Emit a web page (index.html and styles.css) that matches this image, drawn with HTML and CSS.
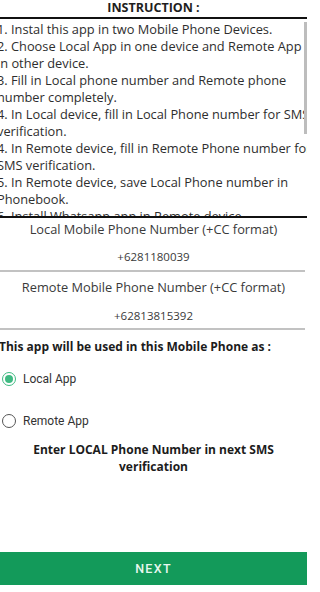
FILE: index.html
```html
<!DOCTYPE html>
<html>
<head>
<meta charset="utf-8">
<link rel="stylesheet" href="styles.css">
</head>
<body>
<div class="screen">
  <div class="title">INSTRUCTION :</div>
  <div class="rule"></div>
  <div class="instructions">
    <div class="instr-text">
      <div class="ln">1. Instal this app in two Mobile Phone Devices.</div>
      <div class="ln">2. Choose Local App in one device and Remote App</div>
      <div class="ln">in other device.</div>
      <div class="ln">3. Fill in Local phone number and Remote phone</div>
      <div class="ln">number completely.</div>
      <div class="ln">4. In Local device, fill in Local Phone number for SMS</div>
      <div class="ln">verification.</div>
      <div class="ln">4. In Remote device, fill in Remote Phone number for</div>
      <div class="ln">SMS verification.</div>
      <div class="ln">5. In Remote device, save Local Phone number in</div>
      <div class="ln">Phonebook.</div>
      <div class="ln">6. Install Whatsapp app in Remote device.</div>
    </div>
    <div class="scrollbar"></div>
  </div>
  <div class="rule"></div>
  <div class="field field-first">
    <div class="field-label">Local Mobile Phone Number (+CC format)</div>
    <div class="field-value">+6281180039</div>
  </div>
  <div class="underline"></div>
  <div class="field field-second">
    <div class="field-label">Remote Mobile Phone Number (+CC format)</div>
    <div class="field-value">+62813815392</div>
  </div>
  <div class="underline"></div>
  <div class="question">This app will be used in this Mobile Phone as :</div>
  <div class="radio-row radio-first">
    <span class="radio radio-on"><span class="radio-dot"></span></span>
    <span class="radio-label">Local App</span>
  </div>
  <div class="radio-row radio-second">
    <span class="radio"></span>
    <span class="radio-label">Remote App</span>
  </div>
  <div class="hint">Enter LOCAL Phone Number in next SMS<br>verification</div>
  <div class="spacer"></div>
  <div class="next-btn">NEXT</div>
  <div class="bottom-gap"></div>
</div>
</body>
</html>
```

FILE: styles.css
```css
html, body {
  margin: 0;
  padding: 0;
  background: #ffffff;
}
.screen {
  width: 307px;
  height: 592px;
  display: flex;
  flex-direction: column;
  overflow: hidden;
  font-family: "Open Sans", "Liberation Sans", sans-serif;
  color: #2b2b2b;
}
.title {
  height: 17px;
  line-height: 15px;
  text-align: center;
  font-weight: 700;
  font-size: 12.5px;
  color: #1e1e1e;
  flex: none;
}
.rule {
  height: 2px;
  background: #111111;
  flex: none;
}
.instructions {
  position: relative;
  height: 197px;
  flex: none;
  overflow: hidden;
}
.instr-text {
  padding-top: 2px;
  margin-left: -3px;
  font-size: 12.8px;
  line-height: 17px;
  color: #2e2e2e;
  white-space: nowrap;
}
.scrollbar {
  position: absolute;
  right: 0;
  top: 3px;
  width: 3px;
  height: 112px;
  background: #bdbdbd;
}
.field {
  display: flex;
  flex-direction: column;
  align-items: center;
  font-size: 12.8px;
  color: #3a3a3a;
  flex: none;
}
.field-first {
  padding-top: 1px;
  gap: 8px;
  padding-bottom: 3px;
}
.field-second {
  padding-top: 5px;
  gap: 9px;
  padding-bottom: 2px;
}
.field-label,
.field-value {
  line-height: 20px;
  white-space: nowrap;
}
.field-value {
  font-size: 11.5px;
}
.underline {
  height: 2px;
  margin-right: 2px;
  background: #c2c2c2;
  flex: none;
}
.question {
  margin-top: 7px;
  margin-left: -1px;
  line-height: 20px;
  font-size: 12px;
  font-weight: 700;
  color: #1c1c1c;
  white-space: nowrap;
}
.radio-row {
  display: flex;
  align-items: center;
  gap: 7px;
  height: 20px;
  padding-left: 2px;
}
.radio-first {
  margin-top: 12px;
}
.radio-second {
  margin-top: 22px;
}
.radio {
  width: 12px;
  height: 12px;
  border: 1.7px solid #555555;
  border-radius: 50%;
  display: flex;
  align-items: center;
  justify-content: center;
  flex: none;
}
.radio-on {
  border-color: #3fba82;
}
.radio-dot {
  width: 8px;
  height: 8px;
  border-radius: 50%;
  background: #3fba82;
}
.radio-label {
  font-family: Roboto, "Liberation Sans", sans-serif;
  font-size: 12px;
  color: #333333;
}
.hint {
  margin-top: 10px;
  text-align: center;
  font-size: 12px;
  font-weight: 700;
  line-height: 17px;
  color: #1c1c1c;
}
.spacer {
  flex: 1;
}
.next-btn {
  height: 33px;
  flex: none;
  background: #139a5a;
  color: #e8f7ee;
  display: flex;
  align-items: center;
  justify-content: center;
  font-family: Roboto, "Liberation Sans", sans-serif;
  font-weight: 500;
  font-size: 12.5px;
  letter-spacing: 1.3px;
}
.bottom-gap {
  height: 7px;
  flex: none;
}
```
